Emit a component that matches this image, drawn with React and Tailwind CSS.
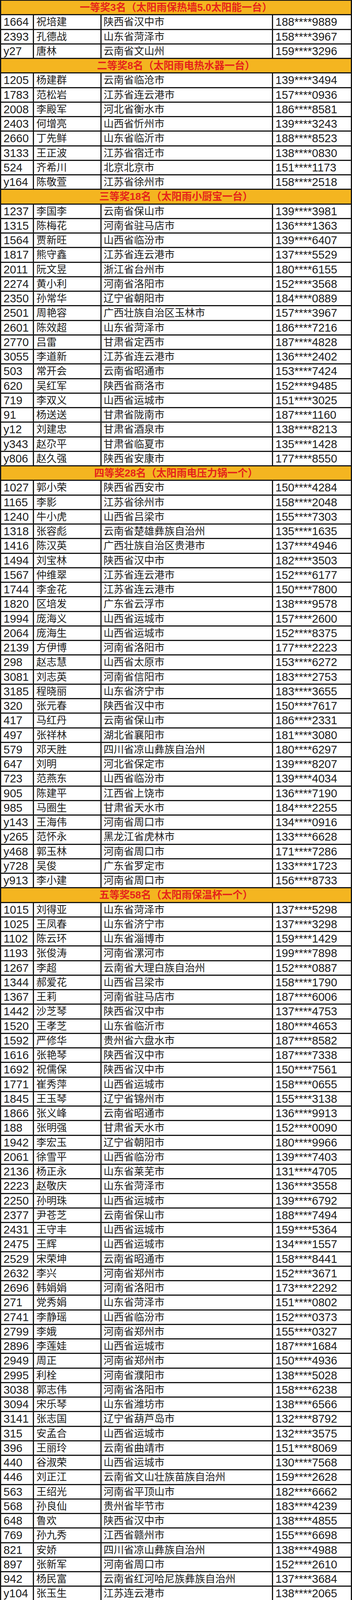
import React from "react";

const sections = [
  {
    title: "一等奖3名（太阳雨保热墙5.0太阳能一台）",
    rows: `1664|祝培建|陕西省汉中市|188****9889
2393|孔德战|山东省菏泽市|158****3967
y27|唐林|云南省文山州|159****3296`,
  },
  {
    title: "二等奖8名（太阳雨电热水器一台）",
    rows: `1205|杨建群|云南省临沧市|139****3494
1783|范松岩|江苏省连云港市|157****0936
2008|李殿军|河北省衡水市|186****8581
2403|何增亮|山西省忻州市|139****3243
2660|丁先鲜|山东省临沂市|188****8523
3133|王正波|江苏省宿迁市|138****0830
524|齐希川|北京北京市|151****1173
y164|陈敬萱|江苏省徐州市|158****2518`,
  },
  {
    title: "三等奖18名（太阳雨小厨宝一台）",
    rows: `1237|李国李|云南省保山市|139****3981
1315|陈梅花|河南省驻马店市|136****1363
1564|贾新旺|山西省临汾市|139****6407
1817|熊守鑫|江苏省连云港市|137****5529
2011|阮文昱|浙江省台州市|180****6155
2274|黄小利|河南省洛阳市|152****3568
2350|孙常华|辽宁省朝阳市|184****0889
2501|周艳容|广西壮族自治区玉林市|157****3967
2601|陈效超|山东省菏泽市|186****7216
2770|吕雷|甘肃省定西市|187****4828
3055|李道新|江苏省连云港市|136****2402
503|常开会|云南省昭通市|153****7424
620|吴红军|陕西省商洛市|152****9485
719|李双义|山西省运城市|151****3025
91|杨送送|甘肃省陇南市|187****1160
y12|刘建忠|甘肃省酒泉市|138****8213
y343|赵尕平|甘肃省临夏市|135****1428
y806|赵久强|陕西省安康市|177****8550`,
  },
  {
    title: "四等奖28名（太阳雨电压力锅一个）",
    rows: `1027|郭小荣|陕西省西安市|150****4284
1165|李影|江苏省徐州市|158****2048
1240|牛小虎|山西省吕梁市|155****7303
1318|张容彪|云南省楚雄彝族自治州|135****1635
1416|陈汉英|广西壮族自治区贵港市|137****4946
1494|刘宝林|陕西省汉中市|182****3503
1567|仲维翠|江苏省连云港市|152****6177
1744|李金花|江苏省连云港市|150****7800
1820|区培发|广东省云浮市|138****9578
1994|庞海义|山西省运城市|157****2600
2064|庞海生|山西省运城市|152****8375
2139|方伊博|河南省洛阳市|177****2223
298|赵志慧|山西省太原市|153****6272
3081|刘志英|河南省信阳市|183****2753
3185|程晓丽|山东省济宁市|183****3655
320|张元春|陕西省汉中市|150****7617
417|马红丹|云南省保山市|186****2331
497|张祥林|湖北省襄阳市|181****3080
579|邓天胜|四川省凉山彝族自治州|180****6297
647|刘明|河北省保定市|139****8207
723|范燕东|山西省临汾市|139****4034
905|陈建平|江西省上饶市|136****7190
985|马圈生|甘肃省天水市|184****2255
y143|王海伟|河南省周口市|134****0916
y265|范怀永|黑龙江省虎林市|133****6628
y468|郭玉林|河南省周口市|171****7286
y728|吴俊|广东省罗定市|133****1723
y913|李小建|河南省周口市|156****8733`,
  },
  {
    title: "五等奖58名（太阳雨保温杯一个）",
    rows: `1015|刘得亚|山东省菏泽市|137****5298
1025|王凤春|山东省济宁市|137****3298
1102|陈云环|山东省淄博市|159****1429
1193|张俊涛|河南省漯河市|199****7898
1267|李超|云南省大理白族自治州|152****0887
1344|郝爱花|山西省吕梁市|158****1790
1367|王莉|河南省驻马店市|187****6006
1442|沙芝琴|陕西省汉中市|137****4753
1520|王孝芝|山东省临沂市|180****4653
1592|严修华|贵州省六盘水市|187****8582
1616|张艳琴|陕西省汉中市|187****7338
1692|祝儒保|陕西省汉中市|150****7561
1771|崔秀萍|山西省运城市|158****0655
1845|王玉琴|辽宁省锦州市|155****3138
1866|张义峰|云南省昭通市|136****9913
188|张明强|甘肃省天水市|152****0090
1942|李宏玉|辽宁省朝阳市|180****9966
2061|徐雪平|山西省临汾市|139****7403
2136|杨正永|山东省莱芜市|131****4705
2223|赵敬庆|山东省菏泽市|136****3558
2250|孙明珠|山西省运城市|139****6792
2377|尹苍芝|云南省保山市|188****7494
2431|王守丰|山西省运城市|159****5364
2475|王辉|山西省运城市|134****1557
2529|宋荣坤|云南省昭通市|158****8441
2632|李兴|河南省郑州市|152****3671
2696|韩娟娟|河南省洛阳市|173****2292
271|党秀娟|山东省菏泽市|151****0802
2741|李静瑶|山西省临汾市|152****0373
2799|李娥|河南省郑州市|155****0327
2896|李莲娃|山西省运城市|187****1684
2949|周正|河南省郑州市|150****4936
2995|利栓|河南省濮阳市|138****5028
3038|郭志伟|河南省洛阳市|158****6238
3094|宋乐琴|山东省潍坊市|138****6566
3141|张志国|辽宁省葫芦岛市|132****8792
315|安孟合|山西省运城市|132****3575
396|王丽玲|云南省曲靖市|151****8069
440|谷淑荣|山西省运城市|130****7568
446|刘正江|云南省文山壮族苗族自治州|159****2628
563|王绍光|河南省平顶山市|182****6662
568|孙良仙|贵州省毕节市|183****4239
648|鲁欢|陕西省汉中市|138****4855
769|孙九秀|江西省赣州市|155****6698
821|安娇|四川省凉山彝族自治州|138****4988
897|张新军|河南省周口市|152****2610
942|杨民富|云南省红河哈尼族彝族自治州|137****3684
y104|张玉生|江苏连云港市|138****2065
y179|刘贻青|广东省阳春市|134****6388
y235|余祥虎|陕西省商洛市|176****9853
y294|毕继友|黑龙江省虎林市|138****0875
y31|龚彪|江西省上饶市|138****5604
y438|黄益刘|广西省钦州市|159****7428
y505|李干福|浙江省丽水市|155****7706
y565|张爽|辽宁省锦州市|159****4321
y764|居龙祥|江苏省高邮市|131****7268
y885|季建伟|苏州市|173****0622
y944|李广云|江苏省徐州市|187****3417`,
  },
  {
    title: "纪念奖88名（防紫外线折叠伞一把）",
    rows: `103|李鹏|陕西省商洛市|152****5799
1056|李魁|安徽省亳州市|138****3231
1068|刘志凯|山西省运城市|138****9851
1163|何先生|云南省曲靖市|181****6145
1185|亓晓艳|山东省莱芜市|139****7729
12|姜周宇|辽宁省营口市|139****1764
1238|王永胜|山西省忻州市|139****8503
125|孟晓慧|山西省吕梁市|186****2575
1260|白千逢|河南省洛阳市|137****7335
1337|李正峰|山东省聊城市|135****8576
1360|陈小寒|陕西省咸阳市|183****2127
1413|曹卫兵|陕西省商洛市|187****2309
1434|朱贵楼|北京北京市|198****8389
1492|李金秀|云南省昭通市|136****6867
1514|康勇|河北省衡水市|186****1619
1585|姚行军|湖北省随州市|151****1117
1662|刘显珍|陕西省汉中市|135****1035
1683|高彦会|云南省昭通市|150****4526
1742|刘倩|江苏省连云港市|139****7962
1764|李龙年|江苏省连云港市|171****5303
1818|罗云|江苏省宿迁市|188****3595
1838|魏飞|山东省临沂市|187****3365
187|徐仁斌|山东省烟台市|176****6919
1914|薛世杰|云南省大理白族自治州|184****6642
1935|宋吉亮|江西省景德镇市|137****0611
1990|李祖静|河南省信阳市|158****4164
2009|刘杰|河南省周口市|177****2817
2062|舒鹏鹏|山西省临汾市|138****4289
2085|卢卫霞|陕西省商洛市|159****1344
2137|周果果|河南省洛阳市|139****2579
2157|武彩霞|山西省运城市|150****5982
222|许云聪|云南省红河哈尼族彝族自治州|139****2755
2251|王李杰|山西省运城市|139****7833
2272|张生龙|江苏省扬州市|153****3903
2333|芮霞|云南省保山市|188****5598
2375|贾长海|河南省洛阳市|156****4557
2387|吕令振|山东省菏泽市|187****6106
2429|何智群|福建省漳州市|135****0591
2484|秦富军|甘肃省庆阳市|180****3674
2527|闫如亭|河南省濮阳市|156****1689
2583|刘铁|辽宁省葫芦岛市|150****8779
260|乔学东|山西省运城市|152****2084
2642|张军明|山东省莱芜市|136****3085
2694|宋兴齐|江苏省南京市|139****4805
2753|贾菊|四川省凉山彝族自治州|155****7321
2797|刘采珍|广西壮族自治区玉林市|157****1085
2850|韩龙国|陕西省咸阳市|158****7086
2905|胡兴桥|云南省文山壮族苗族自治州|188****3275
2947|张云芬|云南省红河哈尼族彝族自治州|134****1169
3045|王来轻|河南省洛阳市|134****3087
3057|梁春梅|河北省衡水市|156****8333
3100|王祥|安徽省宿州市|132****1598
3162|张建华|辽宁省葫芦岛市|150****3848
335|张勇|四川省凉山彝族自治州|147****1713
34|任立中|山西省吕梁市|139****3039
341|蒋跃明|浙江省金华市|138****8926
403|段福仙|山西省吕梁市|199****8606
409|黄祖芬|云南省保山市|158****9483
484|张素燕|山东省青岛市|135****4883
489|苗换喜|河南省驻马店市|158****9862
550|王国荣|广东省清远市|136****5739
556|朱自林|云南省保山市|159****7253
666|幸邦志|四川省凉山彝族自治州|137****3522
675|勒尔克补|四川省凉山彝族自治州|147****5232
73|双扣平|山西省吕梁市|137****4750
732|韩香凡|河南省南阳市|155****0794
743|关小旦|山西省临汾市|175****0179
800|徐天元|甘肃省武威市|180****9361
881|何星琳|山西省临汾市|158****4741
890|宋海艳|辽宁省朝阳市|158****3036
90|陈富霞|四川省凉山彝族自治州|181****5720
953|韩亚伟|河南省商丘市|134****8379
964|马英|山西省运城市|183****2324
y147|杨从甲|云南省保山市|150****1327
y215|梁岗|云南省曲靖市|158****5391
y279|姜海利|黑龙江省虎林市|138****5554
y3|吴云霞|陕西省商洛市|150****0521
y335|许英墩|江苏省连云港市|199****8789
y418|肖霞|河南省开封市|150****6340
y473|王同喜|河南省濮阳市|166****9120
y490|刘高华|河南省周口市|176****3312
y543|马嘿果各莫|四川省冕宁县市|152****8483
y748|李保|河南省开封市|152****6857
y799|王旭新|浙江省金华市|138****1933
y85|王秀艳|内蒙古通辽市|150****1687
y869|朱义钊|江苏省连云港市|151****6621
y918|高波|甘肃省临夏市|182****0765
y930|王春梅|湖北省黄石市|138****3380`,
  },
];

const WinnerRow = ({ id, name, place, phone }) => (
  <div className="grid grid-cols-[84px_173px_439px_1fr] h-[37.26px] border-b-[3px] border-[#151515] bg-white text-[#1c1c1c]">
    <div className="flex items-center pl-[6px] border-r-[3px] border-[#151515] text-[29px] leading-[30px]">
      {id}
    </div>
    <div className="flex items-center pl-[6px] border-r-[3px] border-[#151515] text-[26px] leading-[30px] whitespace-nowrap">
      {name}
    </div>
    <div className="flex items-center pl-[5px] border-r-[3px] border-[#151515] text-[26px] leading-[30px] whitespace-nowrap">
      {place}
    </div>
    <div className="flex items-center pl-[6px] text-[29px] leading-[30px]">
      {phone}
    </div>
  </div>
);

const App = () => {
  return (
    <div className="w-[901px] bg-white font-['Liberation_Sans','Noto_Sans_CJK_SC',sans-serif]">
      <div className="border-t-[2px] border-l-[3px] border-r-[3px] border-[#151515]">
        {sections.map((section) => (
          <div key={section.title}>
            <div className="flex items-center justify-center h-[37.26px] border-b-[3px] border-[#151515] bg-[#F4B520]">
              <span className="text-[26px] font-bold leading-[30px] text-[#E5231B] whitespace-nowrap">
                {section.title}
              </span>
            </div>
            {section.rows.split("\n").map((line) => {
              const [id, name, place, phone] = line.split("|");
              return (
                <WinnerRow
                  key={id}
                  id={id}
                  name={name}
                  place={place}
                  phone={phone}
                />
              );
            })}
          </div>
        ))}
      </div>
    </div>
  );
};

export default App;
